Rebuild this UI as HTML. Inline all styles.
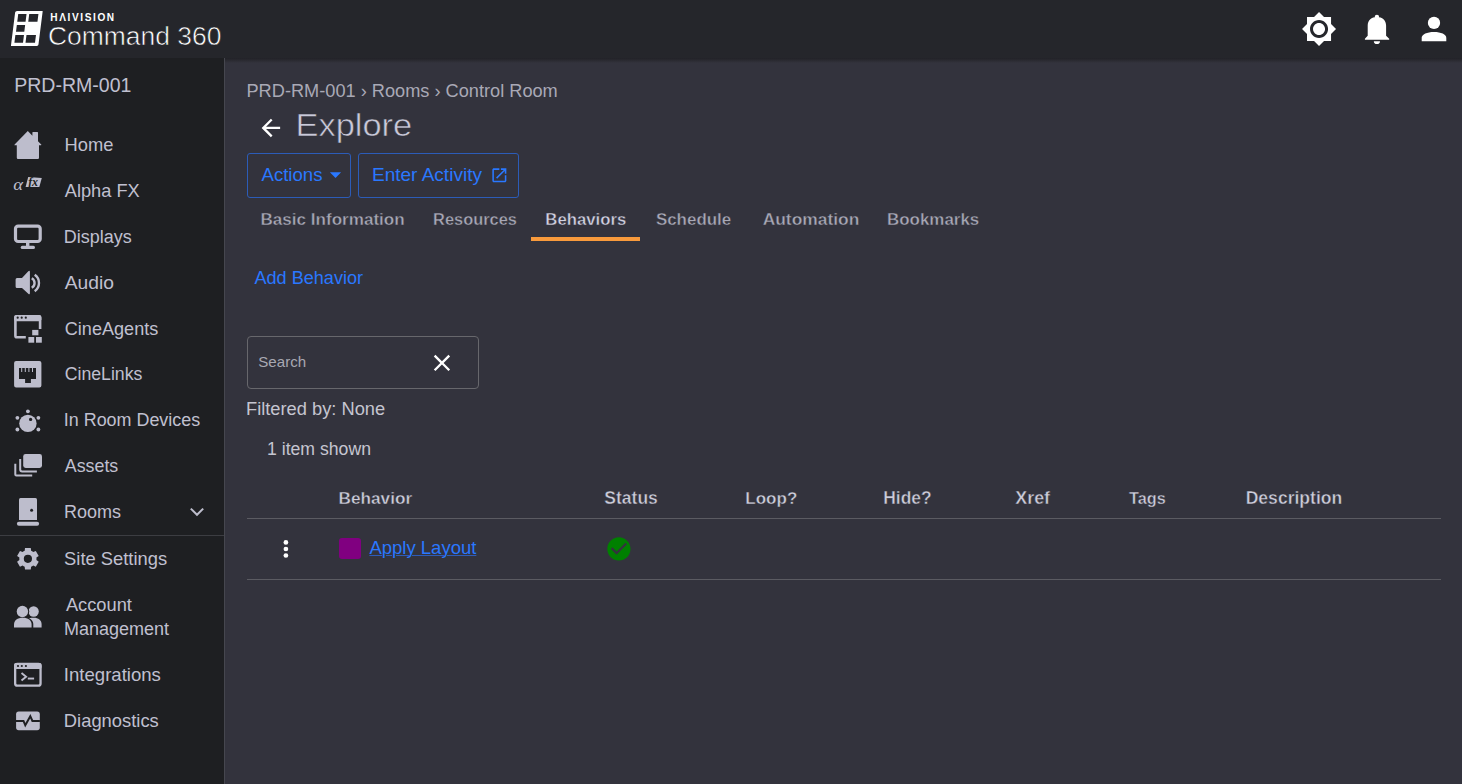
<!DOCTYPE html>
<html><head><meta charset="utf-8"><title>Explore</title>
<style>
*{box-sizing:border-box;margin:0;padding:0}
html,body{width:1462px;height:784px;overflow:hidden;background:#33333d;font-family:"Liberation Sans",sans-serif}
.abs{position:absolute;white-space:nowrap}
#hdr{position:absolute;left:0;top:0;width:1462px;height:58px;background:#25262b}
#side{position:absolute;left:0;top:58px;width:224px;height:726px;background:#1e1f22}
#sideline{position:absolute;left:224px;top:58px;width:1px;height:726px;background:#46474f}
#shadow{position:absolute;left:225px;top:58px;width:1237px;height:5px;background:linear-gradient(#222228 0px,#29292f 2px,#33333d 5px)}
.t{position:absolute;white-space:nowrap;line-height:1}
</style></head>
<body>

<div id="hdr"></div>
<div id="side"></div>
<div id="sideline"></div>
<div id="shadow"></div>
<svg class="abs" style="left:0;top:0" width="60" height="58" viewBox="0 0 60 58">
 <g transform="matrix(1,0,-0.126,1,5.796,0)">
  <path d="M12.6 10.9 H38 Q38.3 10.9 38.3 11.2 V44.6 Q38.3 46 36.9 46 H11.2 Q10.9 46 10.9 45.7 V12.6 Q10.9 10.9 12.6 10.9 Z" fill="#fff"/>
  <path d="M14.2 14 H22.5 V21.8 H14.2 Z M25.2 14 H34.4 V21.8 H25.2 Z M14.2 25.1 H22.5 V31.7 H14.2 Z M14 35 H22.6 V42.8 H14 Z M25.1 35 H34.6 V42.8 H25.1 Z" fill="#25262b"/>
 </g>
</svg>
<svg class="abs" style="left:1300.9px;top:10.9px" width="36.07" height="36.07" viewBox="0 0 24 24"><path fill="#fff" d="M20 8.69V4h-4.69L12 .69 8.69 4H4v4.69L.69 12 4 15.31V20h4.69L12 23.31 15.31 20H20v-4.69L23.31 12 20 8.69zM12 18c-3.31 0-6-2.69-6-6s2.69-6 6-6 6 2.69 6 6-2.69 6-6 6zm0-10c-2.21 0-4 1.79-4 4s1.79 4 4 4 4-1.79 4-4-1.79-4-4-4z"/></svg>
<svg class="abs" style="left:1364px;top:14px" width="28" height="32" viewBox="0 0 28 32">
 <circle cx="12.9" cy="2.9" r="2.2" fill="#fff"/>
 <path fill="#fff" d="M0.9 25.8 L0.9 24.8 L3.7 21.8 L3.7 11.5 C3.7 6 7.5 2.9 12.9 2.9 C18.3 2.9 22.1 6 22.1 11.5 L22.1 21.8 L25.2 24.8 L25.2 25.8 Z"/>
 <path fill="#fff" d="M9.8 27.2 L16 27.2 A3.1 2.8 0 0 1 9.8 27.2 Z"/>
</svg>
<svg class="abs" style="left:1415px;top:14px" width="40" height="30" viewBox="1415 14 40 30">
 <circle cx="1434" cy="22.9" r="6.15" fill="#fff"/>
 <path fill="#fff" d="M1421.7 41.2 L1421.7 37.8 C1421.7 34.2 1427 31.9 1434 31.9 C1441 31.9 1446.3 34.2 1446.3 37.8 L1446.3 41.2 Z"/>
</svg>

<svg class="abs" style="left:0;top:0" width="224" height="784" viewBox="0 0 224 784">
 <g fill="#bdbdcc">
  <!-- home -->
  <path d="M27.8 131 L14.6 144.4 Q14 145.3 15 145.3 L16.8 145.3 L16.8 157.8 Q16.8 159 18 159 L37.8 159 Q39 159 39 157.8 L39 145.3 L40.9 145.3 Q41.8 145.3 41.2 144.5 L38 141.3 L38 132.6 Q38 132 37.4 132 L33 132 Q32.4 132 32.4 132.6 L32.4 135.7 Z"/>
  <!-- alpha fx -->
  <path d="M28.2 177 L41.8 178 L39.3 187 L25.6 187 Z"/>
  <!-- displays -->
  <rect x="15.5" y="226.2" width="24.7" height="15.3" rx="2.6" fill="none" stroke="#bdbdcc" stroke-width="3.2"/>
  <rect x="26" y="242" width="3.4" height="4.5"/>
  <rect x="20.7" y="245.8" width="14.3" height="3.2" rx="1.6"/>
  <!-- audio -->
  <path d="M15.6 279.5 Q15.6 278 17 278 L22 278 L28.3 271.2 Q29.9 269.8 29.9 272 L29.9 293 Q29.9 295.2 28.3 293.8 L22 288 L17 288 Q15.6 288 15.6 286.5 Z"/>
  <path d="M31.75 278.2 A5.5 5.5 0 0 1 31.75 287.8" fill="none" stroke="#bdbdcc" stroke-width="2.4"/>
  <path d="M34.7 274.8 A10 10 0 0 1 34.7 291.2" fill="none" stroke="#bdbdcc" stroke-width="2.4"/>
  <!-- cineagents -->
  <path d="M25.8 337.3 L17 337.3 Q15.4 337.3 15.4 335.7 L15.4 318 Q15.4 316.2 17.2 316.2 L38.4 316.2 Q40.1 316.2 40.1 318 L40.1 328.9" fill="none" stroke="#bdbdcc" stroke-width="2.6"/>
  <rect x="14.1" y="314.9" width="27.3" height="6.3" rx="2"/>
  <rect x="32.2" y="329.9" width="6.2" height="5.4"/>
  <rect x="28.4" y="337" width="5.8" height="5.7"/>
  <rect x="36" y="337" width="5.8" height="5.7"/>
  <!-- cinelinks -->
  <path fill-rule="evenodd" d="M16.1 361 L39.4 361 Q41.4 361 41.4 363 L41.4 385.6 Q41.4 387.6 39.4 387.6 L16.1 387.6 Q14.1 387.6 14.1 385.6 L14.1 363 Q14.1 361 16.1 361 Z M19 368 L19 378.9 L25.1 378.9 L25.1 383 L30.9 383 L30.9 378.9 L36 378.9 L36 368 L33 368 L33 372 L32 372 L32 368 L29.4 368 L29.4 372 L28.4 372 L28.4 368 L25.8 368 L25.8 372 L24.8 372 L24.8 368 L22.2 368 L22.2 372 L21.2 372 L21.2 368 Z"/>
  <!-- in room devices -->
  <circle cx="27.9" cy="423.4" r="8.7"/>
  <circle cx="27.9" cy="411.3" r="1.9"/>
  <circle cx="17.4" cy="417.8" r="1.9"/>
  <circle cx="38.4" cy="417.8" r="1.9"/>
  <circle cx="17.4" cy="429.5" r="1.9"/>
  <circle cx="38.4" cy="429.5" r="1.9"/>
  <!-- assets -->
  <rect x="23.2" y="454.1" width="18.8" height="13.8" rx="2.4"/>
  <path d="M20.2 459 L20.2 469.5 Q20.2 471.5 22.2 471.5 L36.9 471.5" fill="none" stroke="#bdbdcc" stroke-width="2"/>
  <path d="M15.3 463.8 L15.3 474.5 Q15.3 475.5 16.3 475.5 L32.2 475.5" fill="none" stroke="#bdbdcc" stroke-width="2"/>
  <!-- rooms -->
  <path d="M20.5 497.9 L35.5 497.9 Q37 497.9 37 499.4 L37 520 L19 520 L19 499.4 Q19 497.9 20.5 497.9 Z"/>
  <rect x="16.9" y="521.7" width="22.2" height="4.1" rx="2"/>
  <!-- gear -->
  <path fill-rule="evenodd" d="M36.50 558.80 L36.42 560.00 L38.72 561.70 L35.82 566.72 L33.19 565.58 L32.20 566.25 L31.12 566.77 L30.80 569.62 L25.00 569.62 L24.68 566.77 L23.60 566.25 L22.61 565.58 L19.98 566.72 L17.08 561.70 L19.38 560.00 L19.30 558.80 L19.38 557.60 L17.08 555.90 L19.98 550.88 L22.61 552.02 L23.60 551.35 L24.68 550.83 L25.00 547.98 L30.80 547.98 L31.12 550.83 L32.20 551.35 L33.19 552.02 L35.82 550.88 L38.72 555.90 L36.42 557.60 Z M32.00 558.80 A4.10 4.10 0 1 0 23.80 558.80 A4.10 4.10 0 1 0 32.00 558.80 Z"/>
  <!-- account -->
  <circle cx="33.6" cy="611.5" r="5.2"/>
  <path d="M29 618.3 C31 617.9 32.5 617.8 33.6 617.8 C38.5 617.8 41.6 620.5 41.6 624 L41.6 627.4 L33.3 627.4 L33.3 624 C33.3 621.8 31.8 619.5 29 618.3 Z"/>
  <circle cx="22.4" cy="611.5" r="6.8" fill="#1e1f22"/>
  <circle cx="22.4" cy="611.5" r="5.7"/>
  <path d="M14 627.4 L14 624.5 C14 620.5 17.5 617.8 22.8 617.8 C28.1 617.8 31.6 620.5 31.6 624.5 L31.6 627.4 Z"/>
  <!-- integrations -->
  <rect x="15.15" y="664" width="25.4" height="21.7" rx="2.2" fill="none" stroke="#bdbdcc" stroke-width="2.3"/>
  <rect x="14" y="663" width="27.6" height="6" rx="2"/>
  <path d="M21.5 673 L26.1 676.75 L21.5 680.5" fill="none" stroke="#bdbdcc" stroke-width="1.9"/>
  <rect x="27.8" y="677.6" width="6.3" height="1.9"/>
  <!-- diagnostics -->
  <rect x="16.1" y="711.6" width="23.7" height="18.6" rx="2.6"/>
  <path d="M16 720.9 L23.5 720.9 L25.3 725.3 L30.3 716.2 L32.4 720.9 L39.9 720.9" fill="none" stroke="#1e1f22" stroke-width="2" stroke-linejoin="miter"/>
  <!-- rooms chevron -->
  <path d="M190.8 508.6 L197 514.8 L203.2 508.6" fill="none" stroke="#bdbdcc" stroke-width="2"/>
 </g>
 <g fill="#1e1f22">
  <circle cx="17.7" cy="317.7" r="1.1"/><circle cx="21.7" cy="317.7" r="1.1"/><circle cx="25.8" cy="317.7" r="1.1"/>
  <circle cx="18" cy="666" r="1.1"/><circle cx="21.8" cy="666" r="1.1"/><circle cx="25.9" cy="666" r="1.1"/>
  <circle cx="30.6" cy="419.4" r="1.6"/>
  <circle cx="31.6" cy="510.3" r="1.5"/>
 </g>
 <text x="13.2" y="190.2" font-family="Liberation Serif" font-style="italic" font-size="17" fill="#bdbdcc" transform="translate(13.2 190.2) scale(1.1 0.95) translate(-13.2 -190.2)">&#945;</text>
 <text x="28.3" y="186.3" font-family="Liberation Serif" font-style="italic" font-weight="bold" font-size="12" fill="#1e1f22" letter-spacing="-0.3">fx</text>
</svg>

<div class="abs" style="left:0;top:535px;width:224px;height:1px;background:#3c3d42"></div>

<svg class="abs" style="left:257.3px;top:114px" width="27.75" height="27.75" viewBox="0 0 24 24"><path fill="#fff" d="M20 11H7.83l5.59-5.59L12 4l-8 8 8 8 1.41-1.41L7.83 13H20v-2z"/></svg>

<div class="abs" style="left:247px;top:153px;width:104px;height:45px;border:1px solid #2c5cb8;border-radius:3px"></div>
<svg class="abs" style="left:322.4px;top:161px" width="27" height="27" viewBox="0 0 24 24"><path fill="#2a78ff" d="M7 10l5 5 5-5z"/></svg>
<div class="abs" style="left:358px;top:153px;width:161px;height:45px;border:1px solid #2c5cb8;border-radius:3px"></div>
<svg class="abs" style="left:489.7px;top:165.9px" width="18.7" height="18.7" viewBox="0 0 24 24"><path fill="#2a78ff" d="M19 19H5V5h7V3H5c-1.11 0-2 .9-2 2v14c0 1.1.89 2 2 2h14c1.1 0 2-.9 2-2v-7h-2v7zM14 3v2h3.59l-9.83 9.83 1.41 1.41L19 6.41V10h2V3h-7z"/></svg>

<div class="abs" style="left:531px;top:237px;width:109px;height:4px;background:#f89a3c"></div>

<div class="abs" style="left:247px;top:336px;width:232px;height:53px;border:1px solid #67676c;border-radius:4px"></div>
<svg class="abs" style="left:428.1px;top:349.1px" width="27.9" height="27.9" viewBox="0 0 24 24"><path fill="#fff" d="M19 6.41L17.59 5 12 10.59 6.41 5 5 6.41 10.59 12 5 17.59 6.41 19 12 13.41 17.59 19 19 17.59 13.41 12z"/></svg>

<div class="abs" style="left:247px;top:518px;width:1194px;height:1px;background:#5b5b62"></div>
<svg class="abs" style="left:270px;top:530px" width="32" height="40" viewBox="270 530 32 40"><g fill="#fff"><circle cx="285.9" cy="542.4" r="2.35"/><circle cx="285.9" cy="549" r="2.35"/><circle cx="285.9" cy="555.5" r="2.35"/></g></svg>
<div class="abs" style="left:339.3px;top:538.1px;width:21.8px;height:20.9px;background:#800080;border-radius:3px"></div>
<svg class="abs" style="left:605px;top:534.9px" width="27.84" height="27.84" viewBox="0 0 24 24"><path fill="#008000" d="M12 2C6.48 2 2 6.48 2 12s4.48 10 10 10 10-4.48 10-10S17.52 2 12 2zm-2 15l-5-5 1.41-1.41L10 14.17l7.59-7.59L19 8l-9 9z"/></svg>
<div class="abs" style="left:247px;top:579px;width:1194px;height:1px;background:#5b5b62"></div>

<div class="t" id="t_hv" style="left:50.29px;top:13.00px;font-size:10.10px;font-weight:bold;color:#ffffff;letter-spacing:1.6px">HΛIVISION</div>
<div class="t" id="t_cmd" style="left:47.98px;top:23.00px;font-size:26.46px;font-weight:normal;color:#ffffff;-webkit-text-stroke:0.6px #25262b">Command 360</div>
<div class="t" id="t_prd" style="left:14.19px;top:76.00px;font-size:19.54px;font-weight:normal;color:#c0c0d0;">PRD-RM-001</div>
<div class="t" id="n_home" style="left:64.56px;top:136.00px;font-size:18.33px;font-weight:normal;color:#c0c0d0;">Home</div>
<div class="t" id="n_afx" style="left:64.78px;top:182.00px;font-size:18.23px;font-weight:normal;color:#c0c0d0;">Alpha FX</div>
<div class="t" id="n_disp" style="left:63.78px;top:228.00px;font-size:17.98px;font-weight:normal;color:#c0c0d0;">Displays</div>
<div class="t" id="n_aud" style="left:64.76px;top:273.00px;font-size:19.24px;font-weight:normal;color:#c0c0d0;">Audio</div>
<div class="t" id="n_ca" style="left:64.79px;top:320.00px;font-size:18.09px;font-weight:normal;color:#c0c0d0;">CineAgents</div>
<div class="t" id="n_cl" style="left:64.78px;top:366.00px;font-size:17.68px;font-weight:normal;color:#c0c0d0;">CineLinks</div>
<div class="t" id="n_ird" style="left:63.80px;top:412.00px;font-size:17.91px;font-weight:normal;color:#c0c0d0;">In Room Devices</div>
<div class="t" id="n_ass" style="left:64.77px;top:458.00px;font-size:17.84px;font-weight:normal;color:#c0c0d0;">Assets</div>
<div class="t" id="n_rooms" style="left:64.09px;top:503.00px;font-size:18.01px;font-weight:normal;color:#c0c0d0;">Rooms</div>
<div class="t" id="n_ss" style="left:64.08px;top:550.00px;font-size:18.36px;font-weight:normal;color:#c0c0d0;">Site Settings</div>
<div class="t" id="n_acc" style="left:65.89px;top:596.00px;font-size:18.28px;font-weight:normal;color:#c0c0d0;">Account</div>
<div class="t" id="n_mgmt" style="left:63.91px;top:620.00px;font-size:18.01px;font-weight:normal;color:#c0c0d0;">Management</div>
<div class="t" id="n_int" style="left:63.87px;top:666.00px;font-size:18.57px;font-weight:normal;color:#c0c0d0;">Integrations</div>
<div class="t" id="n_diag" style="left:63.87px;top:712.00px;font-size:18.36px;font-weight:normal;color:#c0c0d0;">Diagnostics</div>
<div class="t" id="t_bc" style="left:246.49px;top:82.00px;font-size:18.21px;font-weight:normal;color:#a9a9b6;">PRD-RM-001 › Rooms › Control Room</div>
<div class="t" id="t_exp" style="left:295.47px;top:107.00px;font-size:34.45px;font-weight:normal;color:#c9c9d9;-webkit-text-stroke:0.6px #33333d;transform:scaleY(0.91);transform-origin:0 29.2px">Explore</div>
<div class="t" id="t_act" style="left:261.47px;top:166.00px;font-size:18.62px;font-weight:normal;color:#2a78ff;">Actions</div>
<div class="t" id="t_ent" style="left:371.94px;top:165.00px;font-size:19.05px;font-weight:normal;color:#2a78ff;">Enter Activity</div>
<div class="t" id="tab1" style="left:260.48px;top:211.00px;font-size:17.08px;font-weight:bold;color:#a8a8b6;-webkit-text-stroke:0.4px #33333d">Basic Information</div>
<div class="t" id="tab2" style="left:433.04px;top:211.00px;font-size:16.41px;font-weight:bold;color:#a8a8b6;-webkit-text-stroke:0.4px #33333d">Resources</div>
<div class="t" id="tab3" style="left:545.30px;top:212.00px;font-size:16.74px;font-weight:bold;color:#d2d2e2;-webkit-text-stroke:0.4px #33333d">Behaviors</div>
<div class="t" id="tab4" style="left:655.91px;top:212.00px;font-size:16.94px;font-weight:bold;color:#a8a8b6;-webkit-text-stroke:0.4px #33333d">Schedule</div>
<div class="t" id="tab5" style="left:762.68px;top:211.00px;font-size:17.41px;font-weight:bold;color:#a8a8b6;-webkit-text-stroke:0.4px #33333d">Automation</div>
<div class="t" id="tab6" style="left:887.01px;top:212.00px;font-size:16.95px;font-weight:bold;color:#a8a8b6;-webkit-text-stroke:0.4px #33333d">Bookmarks</div>
<div class="t" id="t_add" style="left:254.50px;top:269.00px;font-size:18.08px;font-weight:normal;color:#2a78ff;">Add Behavior</div>
<div class="t" id="t_srch" style="left:258.28px;top:354.00px;font-size:15.12px;font-weight:normal;color:#a8a8b2;">Search</div>
<div class="t" id="t_filt" style="left:245.99px;top:400.00px;font-size:18.30px;font-weight:normal;color:#c5c5d0;">Filtered by: None</div>
<div class="t" id="t_items" style="left:267.02px;top:441.00px;font-size:17.65px;font-weight:normal;color:#c5c5d0;">1 item shown</div>
<div class="t" id="th1" style="left:338.62px;top:490.00px;font-size:17.18px;font-weight:bold;color:#cdcddb;-webkit-text-stroke:0.4px #33333d">Behavior</div>
<div class="t" id="th2" style="left:604.37px;top:490.00px;font-size:17.49px;font-weight:bold;color:#cdcddb;-webkit-text-stroke:0.4px #33333d">Status</div>
<div class="t" id="th3" style="left:745.32px;top:490.00px;font-size:17.03px;font-weight:bold;color:#cdcddb;-webkit-text-stroke:0.4px #33333d">Loop?</div>
<div class="t" id="th4" style="left:883.29px;top:490.00px;font-size:17.44px;font-weight:bold;color:#cdcddb;-webkit-text-stroke:0.4px #33333d">Hide?</div>
<div class="t" id="th5" style="left:1015.34px;top:490.00px;font-size:17.86px;font-weight:bold;color:#cdcddb;-webkit-text-stroke:0.4px #33333d">Xref</div>
<div class="t" id="th6" style="left:1129.00px;top:490.00px;font-size:16.25px;font-weight:bold;color:#cdcddb;-webkit-text-stroke:0.4px #33333d">Tags</div>
<div class="t" id="th7" style="left:1245.70px;top:490.00px;font-size:17.56px;font-weight:bold;color:#cdcddb;-webkit-text-stroke:0.4px #33333d">Description</div>
<div class="t" id="t_apply" style="left:369.40px;top:539.00px;font-size:18.50px;font-weight:normal;color:#2a78ff;text-decoration:underline;text-decoration-thickness:1px;text-decoration-color:#2d5cb8;text-underline-offset:1px">Apply Layout</div>
</body></html>
